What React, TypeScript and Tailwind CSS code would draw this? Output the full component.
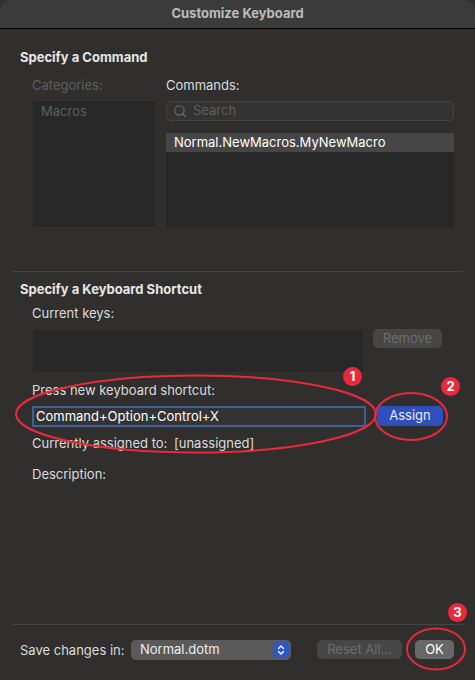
import { Search } from 'lucide-react'

const Badge = ({ n, className }: { n: string; className: string }) => (
  <div
    className={`absolute w-[19px] h-[19px] rounded-full bg-[#ea2a3c] text-white text-[13px] font-bold leading-[19px] text-center ${className}`}
  >
    {n}
  </div>
)

const Label = ({ children, className = '' }: { children: React.ReactNode; className?: string }) => (
  <div className={`text-[13px] leading-[16px] ${className}`}>{children}</div>
)

export default function App() {
  return (
    <div
      className="relative w-[475px] h-[680px] bg-[#302f2e] text-[#dcdcdc] flex flex-col overflow-hidden"
      style={{ fontFamily: 'Inter, Roboto, "Liberation Sans", sans-serif' }}
    >
      {/* title bar */}
      <div className="h-[29px] shrink-0 bg-[#3b3b3b] border-b border-black rounded-t-[10px] flex items-center justify-center">
        <span className="text-[13px] font-bold text-[#bcbcbc]">Customize Keyboard</span>
      </div>

      {/* Specify a Command */}
      <div className="px-[20px] pt-[20px]">
        <Label className="font-bold text-[#e6e6e6]">Specify a Command</Label>
        <div className="flex gap-[10px] pl-[12px] mt-[12px]">
          <div className="w-[124px]">
            <Label className="text-[#5e5e5e]">Categories:</Label>
            <div className="mt-[7px] h-[128px] bg-[#282828] border border-[#303030] px-[8px] pt-[2px]">
              <Label className="text-[#5e5e5e]">Macros</Label>
            </div>
          </div>
          <div className="w-[288px]">
            <Label>Commands:</Label>
            <div className="mt-[8px] h-[20px] rounded-[5px] border border-[#454545] bg-[#333333] flex items-center pl-[6px] gap-[6px]">
              <Search className="w-[14px] h-[14px] text-[#6c6c6c]" strokeWidth={2} />
              <span className="text-[13px] text-[#5f5f5f]">Search</span>
            </div>
            <div className="mt-[12px] h-[95px] bg-[#282828]">
              <div className="h-[19px] bg-[#464646] pl-[8px] flex items-center">
                <span className="text-[13px] text-white">Normal.NewMacros.MyNewMacro</span>
              </div>
            </div>
          </div>
        </div>
      </div>

      <div className="mx-[12px] mt-[43px] h-px bg-[#454545]" />

      {/* Specify a Keyboard Shortcut */}
      <div className="px-[20px] pt-[9px] flex-1">
        <Label className="font-bold text-[#e6e6e6]">Specify a Keyboard Shortcut</Label>
        <div className="pl-[12px]">
          <Label className="mt-[8px]">Current keys:</Label>
          <div className="flex gap-[9px] mt-[8px]">
            <div className="w-[332px] h-[44px] bg-[#282828] border border-[#303030]" />
            <div className="w-[69px] h-[19px] rounded-[5px] bg-[#464646] text-[#6e6e6e] text-[13px] flex items-center justify-center">
              Remove
            </div>
          </div>
          <Label className="mt-[9px]">Press new keyboard shortcut:</Label>
          <div className="flex gap-[11px] mt-[8px] items-start">
            <div className="w-[334px] h-[21px] border-[2px] border-[#3d6096] bg-[#333333] flex items-center pl-[2px]">
              <span className="text-[13px] text-white">Command+Option+Control+X</span>
            </div>
            <div className="w-[66px] h-[20px] rounded-[5px] bg-[#2d50bc] text-[#e8ecf8] text-[13px] flex items-center justify-center">
              Assign
            </div>
          </div>
          <div className="flex mt-[8px] text-[13px] leading-[16px]">
            <span className="w-[142px]">Currently assigned to:</span>
            <span>[unassigned]</span>
          </div>
          <Label className="mt-[15px]">Description:</Label>
        </div>
      </div>

      <div className="mx-[12px] h-px bg-[#454545]" />

      {/* footer */}
      <div className="h-[55px] shrink-0 px-[20px] pt-[15px] flex items-start">
        <span className="text-[13px] leading-[20px] w-[111px]">Save changes in:</span>
        <div className="w-[160px] h-[20px] rounded-[5px] bg-[#5a5a5a] flex items-center pl-[9px] pr-[2px]">
          <span className="text-[13px] text-[#eeeeee] flex-1">Normal.dotm</span>
          <div className="w-[16px] h-[16px] rounded-[4px] bg-[#2f56c8] flex items-center justify-center">
            <svg width="8" height="12" viewBox="0 0 8 12" fill="none" stroke="white" strokeWidth="1.4" strokeLinecap="round" strokeLinejoin="round">
              <path d="M1.5 4.5 L4 2 L6.5 4.5" />
              <path d="M1.5 7.5 L4 10 L6.5 7.5" />
            </svg>
          </div>
        </div>
        <div className="ml-[26px] w-[85px] h-[19px] rounded-[5px] bg-[#464646] text-[#6e6e6e] text-[13px] flex items-center justify-center">
          Reset All...
        </div>
        <div className="ml-[13px] w-[39px] h-[19px] rounded-[5px] bg-[#676767] text-white text-[13px] flex items-center justify-center">
          OK
        </div>
      </div>

      {/* annotations */}
      <svg className="absolute inset-0 pointer-events-none" width="475" height="680">
        <g fill="none" stroke="#ea2a3c" strokeWidth="2">
          <ellipse cx="196" cy="414" rx="180" ry="38.5" />
          <ellipse cx="411" cy="416.5" rx="36" ry="23.5" />
          <ellipse cx="436" cy="649" rx="29" ry="20.5" />
        </g>
      </svg>
      <Badge n="1" className="left-[343px] top-[367px]" />
      <Badge n="2" className="left-[441px] top-[377px]" />
      <Badge n="3" className="left-[448px] top-[603px]" />
    </div>
  )
}
